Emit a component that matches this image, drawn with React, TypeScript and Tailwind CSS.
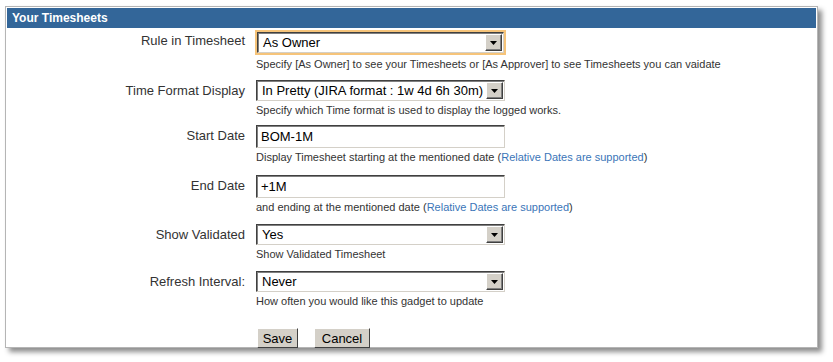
import type { ReactNode } from "react";

function Arrow() {
  return (
    <span className="flex h-[17px] w-[17px] items-center justify-center border border-t-[#fff] border-l-[#fff] border-r-[#404040] border-b-[#404040] bg-[#d4d0c8] shadow-[inset_-1px_-1px_0_#808080]">
      <svg width="7" height="4" viewBox="0 0 7 4">
        <path d="M0 0h7L3.5 4z" fill="#000" />
      </svg>
    </span>
  );
}

function FakeSelect({ value, width, focused }: { value: string; width: string; focused?: boolean }) {
  return (
    <div className={focused ? "my-[2px] ml-px outline-2 outline-[#f6c47a]" : ""}>
      <div
        className={`flex h-[21px] items-center justify-between border border-t-[#404040] border-l-[#404040] border-r-[#d4d0c8] border-b-[#d4d0c8] bg-white pl-[5px] pr-px text-[13px] text-black ${width}`}
        style={{ boxShadow: "inset 1px 1px 0 #808080" }}
      >
        <span>{value}</span>
        <Arrow />
      </div>
    </div>
  );
}

function FakeInput({ value }: { value: string }) {
  return (
    <div
      className="flex h-[23px] w-[249px] items-center border border-t-[#404040] border-l-[#404040] border-r-[#d4d0c8] border-b-[#d4d0c8] bg-white pl-[4px] text-[13px] text-black"
      style={{ boxShadow: "inset 1px 1px 0 #808080" }}
    >
      {value}
    </div>
  );
}

function Row({ label, field, help, className }: { label: string; field: ReactNode; help: ReactNode; className: string }) {
  return (
    <div className={`flex ${className}`}>
      <div className="w-[242px] shrink-0 pt-[2px] pr-[4px] text-right text-[13px] leading-[18px] text-[#333]">{label}</div>
      <div className="ml-[7px] flex flex-col items-start">
        {field}
        <div className="mt-[2px] text-[11px] leading-[14px] text-[#333]">{help}</div>
      </div>
    </div>
  );
}

const rel = <span className="text-[#3a75b8]">Relative Dates are supported</span>;

export default function App() {
  return (
    <div className="h-[362px] w-[833px] bg-white pt-[6px] pl-[5px] font-['Liberation_Sans',Arial,sans-serif]">
      <div className="h-[342px] w-[813px] border border-[#b5b5b5] bg-white px-px pt-px shadow-[4px_4px_5px_rgba(0,0,0,0.45)]">
        <div className="flex h-[20px] items-center bg-[#336699] pl-[5px] text-[12px] font-bold text-white">Your Timesheets</div>
        <Row
          className="mt-[2px]"
          label="Rule in Timesheet"
          field={<FakeSelect value="As Owner" width="w-[247px]" focused />}
          help="Specify [As Owner] to see your Timesheets or [As Approver] to see Timesheets you can vaidate"
        />
        <Row
          className="mt-[9px]"
          label="Time Format Display"
          field={<FakeSelect value="In Pretty (JIRA format : 1w 4d 6h 30m)" width="w-[249px]" />}
          help="Specify which Time format is used to display the logged works."
        />
        <Row
          className="mt-[8px]"
          label="Start Date"
          field={<FakeInput value="BOM-1M" />}
          help={<>Display Timesheet starting at the mentioned date ({rel})</>}
        />
        <Row
          className="mt-[11px]"
          label="End Date"
          field={<FakeInput value="+1M" />}
          help={<>and ending at the mentioned date ({rel})</>}
        />
        <Row
          className="mt-[10px]"
          label="Show Validated"
          field={<FakeSelect value="Yes" width="w-[249px]" />}
          help="Show Validated Timesheet"
        />
        <Row
          className="mt-[10px]"
          label="Refresh Interval:"
          field={<FakeSelect value="Never" width="w-[249px]" />}
          help="How often you would like this gadget to update"
        />
        <div className="mt-[20px] ml-[250px] flex gap-[16px]">
          <button className="h-[20px] w-[41px] border border-t-[#fff] border-l-[#fff] border-r-[#404040] border-b-[#404040] bg-[#d4d0c8] text-[13px] text-black">Save</button>
          <button className="h-[20px] w-[56px] border border-t-[#fff] border-l-[#fff] border-r-[#404040] border-b-[#404040] bg-[#d4d0c8] text-[13px] text-black">Cancel</button>
        </div>
      </div>
    </div>
  );
}
